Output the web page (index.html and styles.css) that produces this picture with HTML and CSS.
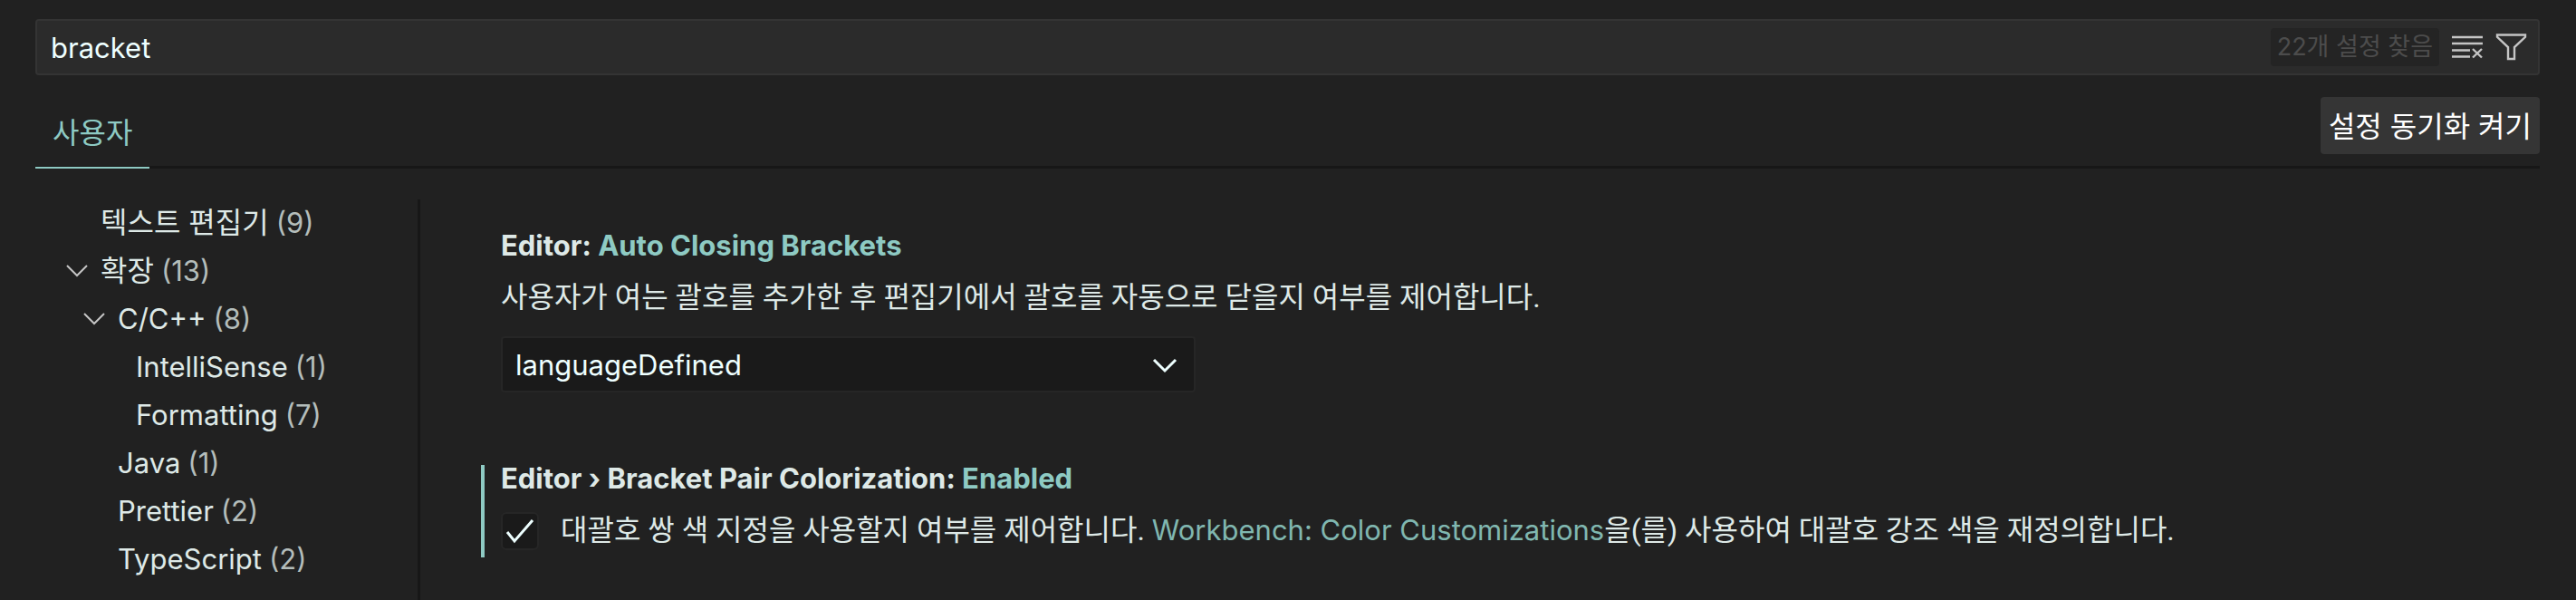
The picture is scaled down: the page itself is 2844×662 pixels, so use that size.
FILE: index.html
```html
<!DOCTYPE html>
<html lang="ko">
<head>
    <meta charset="UTF-8">
    <meta name="viewport" content="width=device-width, initial-scale=1.0">
    <title>설정</title>
    <link rel="stylesheet" href="styles.css">
</head>
<body>
	<div class="settings">
		<div class="search">
			<input class="search_input" type="text" value="bracket" aria-label="설정 검색">
			<span class="search_count">22개 설정 찾음</span>
			<button class="icon_btn" aria-label="검색 지우기">
				<svg width="36" height="36" viewBox="0 0 36 36" fill="none" stroke="#c5c5c5" stroke-width="2.4">
					<path d="M1 7h34M1 14h34M1 21.5h20M1 28.5h20M24 20l10 9.5M34 20L24 29.5"/>
				</svg>
			</button>
			<button class="icon_btn" aria-label="필터">
				<svg width="36" height="36" viewBox="0 0 36 36" fill="none" stroke="#c5c5c5" stroke-width="2.4">
					<path d="M3 4.5h31v2.3L22 18v13h-7V18L3 6.8z"/>
				</svg>
			</button>
		</div>

		<div class="tabs">
			<button class="tab">사용자</button>
			<button class="sync_btn">설정 동기화 켜기</button>
		</div>

		<div class="wrapper">
			<ul class="toc">
				<li class="level1"><span class="arrow"></span><span class="ko">텍스트 편집기</span> <span class="count">(9)</span></li>
				<li class="level1">
					<svg class="arrow" viewBox="0 0 24 14"><path d="M1 1l11 11L23 1"/></svg><span class="ko">확장</span> <span class="count">(13)</span>
				</li>
				<li class="level2">
					<svg class="arrow" viewBox="0 0 24 14"><path d="M1 1l11 11L23 1"/></svg>C/C++ <span class="count">(8)</span>
				</li>
				<li class="level3"><span class="arrow"></span>IntelliSense <span class="count">(1)</span></li>
				<li class="level3"><span class="arrow"></span>Formatting <span class="count">(7)</span></li>
				<li class="level2"><span class="arrow"></span>Java <span class="count">(1)</span></li>
				<li class="level2"><span class="arrow"></span>Prettier <span class="count">(2)</span></li>
				<li class="level2"><span class="arrow"></span>TypeScript <span class="count">(2)</span></li>
			</ul>

			<div class="content">
				<div class="item">
					<h3>Editor: <span class="name">Auto Closing Brackets</span></h3>
					<label class="desc" for="auto_closing">사용자가 여는 괄호를 추가한 후 편집기에서 괄호를 자동으로 닫을지 여부를 제어합니다.</label>
					<div class="select">
						<select id="auto_closing">
							<option>always</option>
							<option selected>languageDefined</option>
							<option>beforeWhitespace</option>
							<option>never</option>
						</select>
						<svg class="select_arrow" viewBox="0 0 28 18"><path d="M2 3l12 12L26 3"/></svg>
					</div>
				</div>
				<div class="item modified">
					<h3>Editor › Bracket Pair Colorization: <span class="name">Enabled</span></h3>
					<div class="check_row">
						<span class="check">
							<input id="pair_color" type="checkbox" checked>
							<svg viewBox="0 0 42 42"><path d="M7 22l8 10L35 9"/></svg>
						</span>
						<label class="desc" for="pair_color">대괄호 쌍 색 지정을 사용할지 여부를 제어합니다. <a href="#">Workbench: Color Customizations</a>을(를) 사용하여 대괄호 강조 색을 재정의합니다.</label>
					</div>
				</div>
			</div>
		</div>
	</div>
</body>
</html>
```
FILE: styles.css
```css
*{
	box-sizing: border-box;
}
body{
	margin: 0;
	background: #212121;
	color: #dee9e7;
	font-family: Inter, "Noto Sans CJK KR", sans-serif;
	font-size: 31px;
	line-height: 53px;
}
button, input, select{
	font: inherit;
	color: inherit;
	margin: 0;
}
.settings{
	display: flex;
	flex-direction: column;
	min-height: 100vh;
	padding: 21px 40px 0 39px;
}

/* search bar */
.search{
	display: flex;
	align-items: center;
	height: 62px;
	padding-right: 12px;
	background: #2b2b2b;
	border: 2px solid #343434;
	border-radius: 4px;
}
.search_input{
	flex: 1;
	min-width: 0;
	padding: 0 15px;
	background: none;
	border: 0;
	outline: 0;
	color: #eeffff;
}
.search_count{
	margin-right: 13px;
	padding: 0 7px;
	background: #242424;
	border-radius: 4px;
	color: #4c4c4c;
	font-size: 27px;
	line-height: 42px;
}
.icon_btn{
	display: flex;
	padding: 0;
	background: none;
	border: 0;
	cursor: pointer;
}
.icon_btn + .icon_btn{
	margin-left: 12px;
}

/* tabs */
.tabs{
	display: flex;
	justify-content: space-between;
	align-items: flex-start;
	height: 103px;
	padding-top: 24px;
	border-bottom: 3px solid #171717;
}
.tab{
	height: 79px;
	padding: 2px 19px 0;
	background: none;
	border: 0;
	border-bottom: 2px solid #8ecac3;
	color: #8ecac3;
	font-size: 32px;
}
.sync_btn{
	height: 63px;
	padding: 2px 9px 0;
	background: #353535;
	border: 0;
	border-radius: 4px;
	color: #ffffff;
	font-size: 32px;
	cursor: pointer;
}

.wrapper{
	display: flex;
	flex: 1;
	padding-top: 34px;
}

/* table of contents */
.toc{
	width: 425px;
	flex-shrink: 0;
	margin: 0;
	padding: 0;
	border-right: 3px solid #171717;
	list-style: none;
	line-height: 52px;
}
.toc li{
	display: flex;
	align-items: center;
	gap: 8px;
	margin-bottom: 1px;
}
.arrow{
	width: 24px;
	height: 14px;
	margin-right: 6px;
	fill: none;
	stroke: #c5c5c5;
	stroke-width: 2;
}
.level1{ padding-left: 34px;}
.level2{ padding-left: 53px;}
.level3{ padding-left: 73px;}
.ko{ font-size: 32px;}
.count{ color: #b4bdbb;}

/* settings list */
.content{
	flex: 1;
	padding: 19px 0 0 67px;
}
.item{
	padding-left: 18px;
	border-left: 4px solid transparent;
}
.modified{
	margin-top: 80px;
	padding-bottom: 8px;
	border-left-color: #8ecac3;
}
h3{
	margin: 0;
	font-size: 31px;
	line-height: 64px;
	font-weight: 700;
}
.name{ color: #8ecac3;}
.desc{
	display: block;
	font-family: Roboto, "Noto Sans CJK KR", sans-serif;
	font-size: 32px;
	line-height: 51px;
}
.desc a{
	color: #80b7b0;
	font-family: Inter, sans-serif;
	font-size: 31px;
	text-decoration: none;
}
.select{
	position: relative;
	width: 767px;
	max-width: 100%;
	margin-top: 17px;
}
.select select{
	display: block;
	width: 100%;
	height: 62px;
	padding: 0 14px;
	appearance: none;
	background: #1a1a1a;
	border: 2px solid #262626;
	border-radius: 4px;
	color: #eeffff;
}
.select_arrow{
	position: absolute;
	right: 20px;
	top: 23px;
	width: 28px;
	height: 18px;
	fill: none;
	stroke: #eeffff;
	stroke-width: 3;
	pointer-events: none;
}
.modified h3{
	line-height: 30px;
}
.check_row{
	display: flex;
	align-items: flex-start;
	gap: 24px;
	margin-top: 22px;
}
.check_row .desc{
	line-height: 40px;
}
.check{
	display: grid;
}
.check input, .check svg{
	grid-area: 1 / 1;
	width: 42px;
	height: 42px;
}
.check input{
	appearance: none;
	background: #1a1a1a;
	border: 2px solid #262626;
	border-radius: 6px;
}
.check svg{
	fill: none;
	stroke: #eeffff;
	stroke-width: 3;
	pointer-events: none;
}
```
